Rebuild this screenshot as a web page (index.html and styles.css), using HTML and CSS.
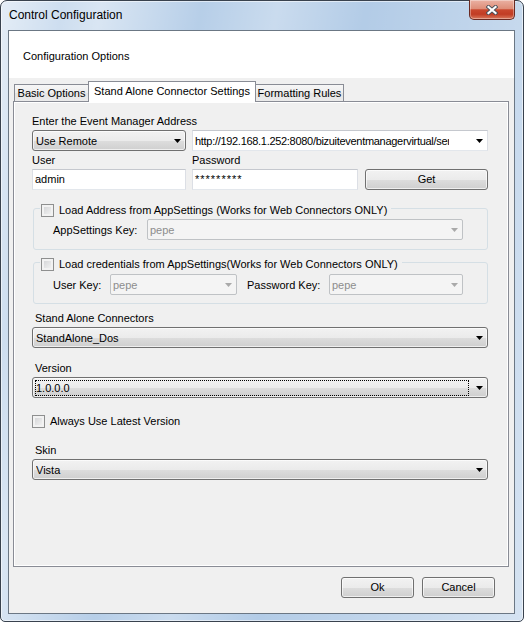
FILE: index.html
```html
<!DOCTYPE html>
<html>
<head>
<meta charset="utf-8">
<title>Control Configuration</title>
<link rel="stylesheet" href="styles.css">
</head>
<body>
<div class="window">
  <div class="titlebar">
    <span class="title">Control Configuration</span>
    <div class="close">
      <svg width="12" height="10" viewBox="0 0 12 10">
        <path d="M2.5 2L9.5 8M9.5 2L2.5 8" stroke="#4a505a" stroke-width="4" stroke-linecap="square" fill="none"/>
        <path d="M2.5 2L9.5 8M9.5 2L2.5 8" stroke="#ffffff" stroke-width="2.2" stroke-linecap="square" fill="none"/>
      </svg>
    </div>
  </div>
  <div class="client">
    <div class="header">Configuration Options</div>
    <div class="body">
      <div class="tabs">
        <div class="tab t1">Basic Options</div>
        <div class="tab t2 active">Stand Alone Connector Settings</div>
        <div class="tab t3">Formatting Rules</div>
      </div>
      <div class="panel">
        <div class="page">
          <div class="label">Enter the Event Manager Address</div>
          <div class="row">
            <div class="combo btnlike w-mode"><span class="ctext">Use Remote</span><svg class="arrow" width="7" height="4" viewBox="0 0 7 4"><path d="M0 0H7L3.5 4Z"/></svg></div>
            <div class="combo edit w-url"><span class="ctext url">http://192.168.1.252:8080/bizuiteventmanagervirtual/services</span><svg class="arrow" width="7" height="4" viewBox="0 0 7 4"><path d="M0 0H7L3.5 4Z"/></svg></div>
          </div>
          <div class="row">
            <span class="label w-userlbl">User</span>
            <span class="label">Password</span>
          </div>
          <div class="row">
            <div class="textbox w-user">admin</div>
            <div class="textbox w-pass pw">*********</div>
            <div class="button w-get">Get</div>
          </div>
          <fieldset class="group g1">
            <legend><span class="lg"><span class="check"></span>Load Address from AppSettings (Works for Web Connectors ONLY)</span></legend>
            <div class="grow">
              <span class="glabel w-askey">AppSettings Key:</span>
              <div class="combo dis w-askeyc"><span class="ctext">pepe</span><svg class="arrow" width="7" height="4" viewBox="0 0 7 4"><path d="M0 0H7L3.5 4Z"/></svg></div>
            </div>
          </fieldset>
          <fieldset class="group g2">
            <legend><span class="lg"><span class="check"></span>Load credentials from AppSettings(Works for Web Connectors ONLY)</span></legend>
            <div class="grow">
              <span class="glabel w-ukey">User Key:</span>
              <div class="combo dis w-ukeyc"><span class="ctext">pepe</span><svg class="arrow" width="7" height="4" viewBox="0 0 7 4"><path d="M0 0H7L3.5 4Z"/></svg></div>
              <span class="glabel w-pkey">Password Key:</span>
              <div class="combo dis w-pkeyc"><span class="ctext">pepe</span><svg class="arrow" width="7" height="4" viewBox="0 0 7 4"><path d="M0 0H7L3.5 4Z"/></svg></div>
            </div>
          </fieldset>
          <div class="label pad3 sa-label">Stand Alone Connectors</div>
          <div class="row">
            <div class="combo btnlike full"><span class="ctext">StandAlone_Dos</span><svg class="arrow" width="7" height="4" viewBox="0 0 7 4"><path d="M0 0H7L3.5 4Z"/></svg></div>
          </div>
          <div class="label pad3 ver-label">Version</div>
          <div class="row">
            <div class="combo btnlike full focused"><span class="focus">1.0.0.0</span><svg class="arrow" width="7" height="4" viewBox="0 0 7 4"><path d="M0 0H7L3.5 4Z"/></svg></div>
          </div>
          <div class="always"><span class="check"></span>Always Use Latest Version</div>
          <div class="label pad3 skin-label">Skin</div>
          <div class="row">
            <div class="combo btnlike full"><span class="ctext">Vista</span><svg class="arrow" width="7" height="4" viewBox="0 0 7 4"><path d="M0 0H7L3.5 4Z"/></svg></div>
          </div>
        </div>
      </div>
      <div class="btnrow">
        <div class="button bbtn">Ok</div>
        <div class="button bbtn">Cancel</div>
      </div>
    </div>
  </div>
</div>
</body>
</html>
```
FILE: styles.css
```css
* { box-sizing: border-box; }
html, body { margin: 0; padding: 0; background: #ffffff; }
body {
  font-family: "Liberation Sans", Arial, sans-serif;
  font-size: 11px;
  color: #000;
}

.window {
  width: 524px;
  height: 622px;
  border: 1px solid #39424e;
  border-radius: 7px 7px 5px 5px;
  padding: 0 8px 7px 7px;
  display: flex;
  flex-direction: column;
  background:
    linear-gradient(100deg, rgba(255,255,255,.65) 0%, rgba(255,255,255,.35) 10%, rgba(255,255,255,.5) 16%, rgba(255,255,255,.05) 32%, rgba(255,255,255,.3) 44%, rgba(255,255,255,0) 58%, rgba(255,255,255,.2) 78%, rgba(255,255,255,.45) 100%),
    #b3cce7;
  box-shadow: inset 0 0 0 1px rgba(255,255,255,.55);
}

.titlebar {
  height: 29px;
  flex: none;
  display: flex;
  justify-content: space-between;
  align-items: flex-start;
}
.title {
  font-size: 12px;
  line-height: 15px;
  margin: 7px 0 0 1px;
  white-space: nowrap;
}
.close {
  width: 46px;
  height: 20px;
  margin-top: -1px;
  border: 1px solid #6a2a22;
  border-top: 0;
  border-radius: 0 0 5px 5px;
  background: linear-gradient(#eab1a3 0%, #de8e79 45%, #c9472e 52%, #c13c24 75%, #d9785c 100%);
  box-shadow: inset 0 0 0 1px rgba(255,255,255,.35);
  display: flex;
  align-items: center;
  justify-content: center;
}

.client {
  height: 584px;
  flex: none;
  border: 1px solid #6b7784;
  background: #f0f0f0;
  display: flex;
  flex-direction: column;
}
.header {
  height: 47px;
  flex: none;
  background: #ffffff;
  padding: 18px 0 0 14px;
  line-height: 14px;
}
.body {
  flex: 1;
  padding-left: 4px;
}

.tabs {
  height: 23px;
  display: flex;
  align-items: flex-end;
}
.tab {
  height: 17px;
  border: 1px solid #898c95;
  border-bottom: 0;
  background: linear-gradient(#f6f6f6, #eeeeee 50%, #e4e4e4 51%, #ebebeb);
  line-height: 15px;
  padding-top: 1px;
  text-align: center;
  white-space: nowrap;
}
.tab + .tab { margin-left: -1px; }
.t1 { width: 75px; margin-left: 1px; }
.t2 { width: 168px; }
.t3 { width: 89px; }
.tab.active {
  height: 21px;
  margin-bottom: -1px;
  background: #ffffff;
  padding-top: 2px;
  position: relative;
  z-index: 1;
}

.panel {
  width: 496px;
  height: 466px;
  border: 1px solid #898c95;
  background: #ffffff;
  padding: 1px;
}
.page {
  height: 100%;
  background: #f0f0f0;
  padding: 11px 19px 0 17px;
}

.label {
  display: block;
  line-height: 14px;
  height: 14px;
  white-space: nowrap;
}
.pad3 { padding-left: 3px; }
.row { display: flex; margin-top: 2px; }

.combo {
  height: 21px;
  display: flex;
  align-items: center;
}
.ctext {
  flex: 1;
  white-space: nowrap;
  overflow: hidden;
  line-height: 14px;
}
.arrow { flex: none; margin-right: 4px; fill: #000; }

.btnlike, .button {
  border: 1px solid #707070;
  border-radius: 3px;
  background: linear-gradient(#f2f2f2, #ebebeb 50%, #dddddd 51%, #cfcfcf);
  box-shadow: inset 0 0 0 1px rgba(255,255,255,.65);
}
.btnlike { padding-left: 3px; }

.edit {
  background: #ffffff;
  border: 1px solid;
  border-color: #c5c8ce #dcdfe5 #e3e7ec #dcdfe5;
  padding-left: 2px;
}
.url { flex: 0 0 254px; letter-spacing: -0.3px; }
.edit .arrow { margin-left: auto; }

.dis {
  border: 1px solid #bfc2c5;
  border-radius: 2px;
  background: #f4f4f4;
  color: #8d8d8d;
  padding-left: 2px;
}
.dis .arrow { fill: #a9a9a9; }

.textbox {
  height: 21px;
  border: 1px solid;
  border-color: #c5c8ce #dcdfe5 #e3e7ec #dcdfe5;
  background: #ffffff;
  padding-left: 2px;
  line-height: 19px;
  white-space: nowrap;
}
.pw { letter-spacing: 1px; }

.button {
  height: 21px;
  line-height: 19px;
  text-align: center;
}

.w-mode { width: 154px; }
.w-url { width: 296px; margin-left: 6px; }
.w-userlbl { width: 160px; }
.w-user { width: 154px; }
.w-pass { width: 166px; margin-left: 6px; }
.w-get { width: 123px; margin-left: 7px; }
.full { width: 456px; }

.group {
  margin: 9px 0 0 1px;
  width: 455px;
  min-width: 0;
  border: 1px solid #d5dfe5;
  border-radius: 3px;
  padding: 2px 0 9px 0;
}
.g2 { margin-top: 3px; padding: 3px 0 8px 0; }
.group legend {
  margin-left: 6px;
  padding: 4px 4px 0 1px;
  line-height: 14px;
}
.lg {
  display: flex;
  align-items: center;
  height: 14px;
  white-space: nowrap;
}
.grow {
  display: flex;
  align-items: center;
  padding-left: 19px;
}
.glabel { line-height: 14px; white-space: nowrap; flex: none; }
.w-askey { width: 94px; }
.w-askeyc { width: 316px; }
.w-ukey { width: 57px; }
.w-ukeyc { width: 127px; }
.w-pkey { width: 82px; margin-left: 10px; }
.w-pkeyc { width: 134px; }

.check {
  flex: none;
  width: 13px;
  height: 13px;
  border: 1px solid #8e8f8f;
  background: linear-gradient(135deg, #cfd0d2, #f7f7f7);
  box-shadow: inset 0 0 0 2px #f2f2f2;
  margin-right: 5px;
}

.sa-label { margin-top: 7px; }
.ver-label { margin-top: 13px; }
.skin-label { margin-top: 15px; }

.focused { padding: 2px 0 1px 2px; }
.focus {
  flex: 1;
  height: 16px;
  border: 1px dotted #000;
  line-height: 14px;
  margin-right: 7px;
  white-space: nowrap;
}

.always {
  display: flex;
  align-items: center;
  height: 14px;
  margin-top: 16px;
  line-height: 14px;
}

.btnrow {
  display: flex;
  justify-content: flex-end;
  gap: 8px;
  margin-top: 10px;
  padding-right: 19px;
}
.bbtn { width: 73px; }
```
